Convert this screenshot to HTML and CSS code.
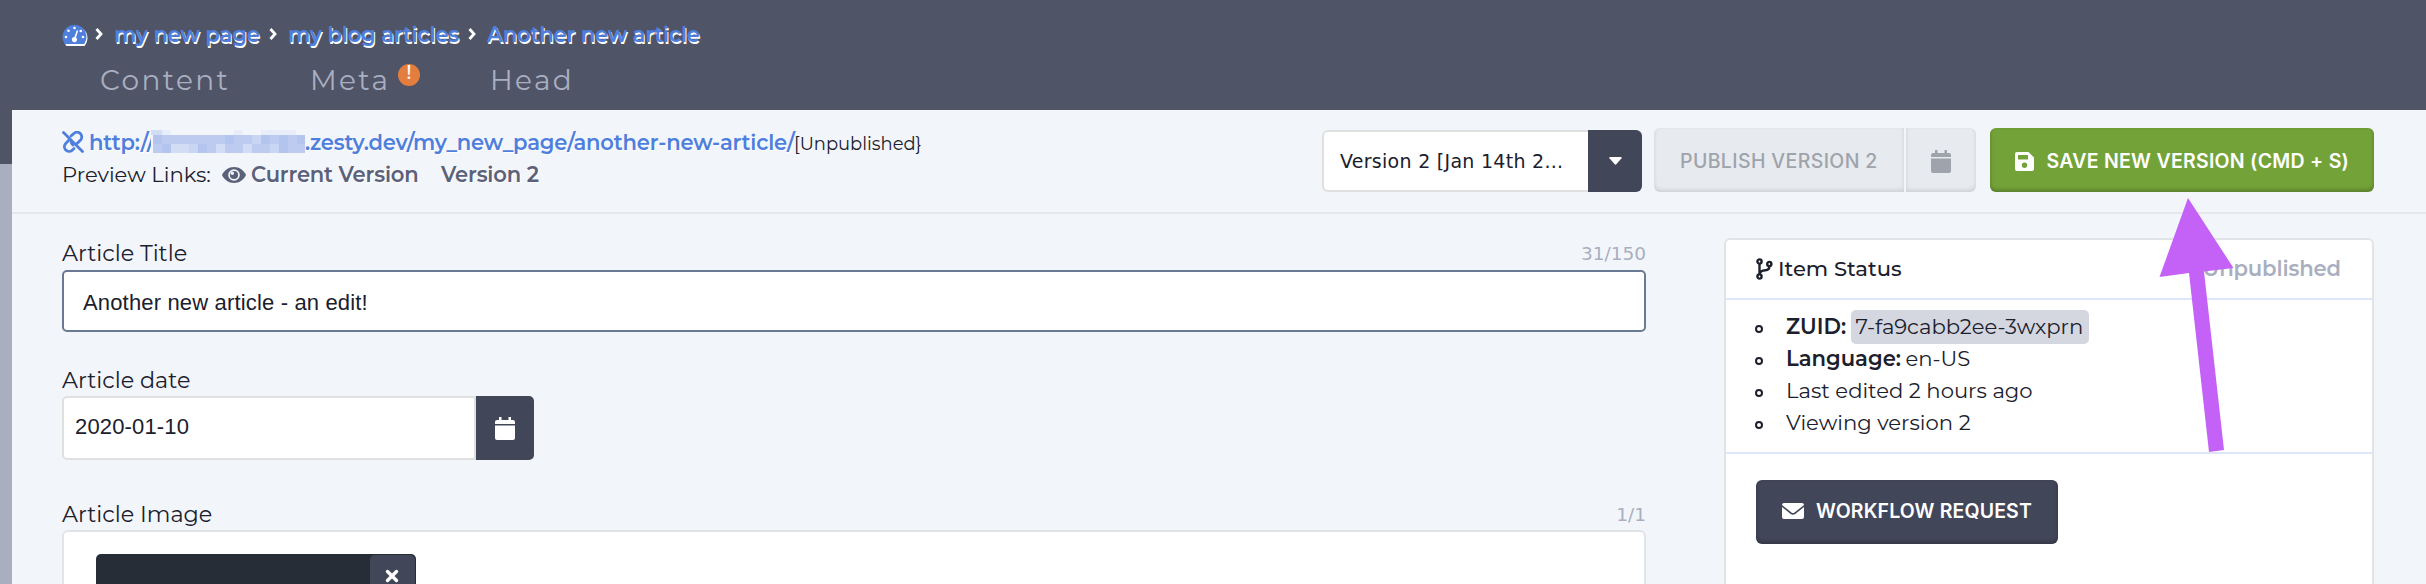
FILE: index.html
```html
<!DOCTYPE html>
<html lang="en">
<head>
<meta charset="utf-8">
<title>Another new article</title>
<link rel="stylesheet" href="styles.css">
</head>
<body>
<div class="app">
  <header class="header">
    <nav class="crumbs">
      <svg class="gauge" viewBox="0 0 26 22"><path fill="#fff" d="M4 21.500A12 12 0 1 1 23 21.500Q22.500 22 22 22H5Q4.500 22 4 21.500Z"/><path fill="#4f7fdd" d="M2.500 19.500A12 12 0 1 1 22.500 19.500Q22 20 21.500 20H3.500Q3 20 2.500 19.500Z"/><g fill="#fff"><circle cx="4" cy="13" r="1.300"/><circle cx="6.500" cy="6.800" r="1.300"/><circle cx="12.500" cy="4" r="1.300"/><circle cx="21" cy="13" r="1.300"/><circle cx="18.800" cy="7" r="1.300"/><path d="M14.800 6.300L16.200 6.800L14 13.500A2.600 2.600 0 1 1 12.400 13Z"/></g></svg>
      <svg class="chev" viewBox="0 0 8 12"><path d="M1.500 1L6 6L1.500 11"/></svg>
      <a class="crumb c1">my new page</a>
      <svg class="chev" viewBox="0 0 8 12"><path d="M1.500 1L6 6L1.500 11"/></svg>
      <a class="crumb c2">my blog articles</a>
      <svg class="chev" viewBox="0 0 8 12"><path d="M1.500 1L6 6L1.500 11"/></svg>
      <a class="crumb">Another new article</a>
    </nav>
    <div class="tabs">
      <span class="tab-content">Content</span>
      <span class="tab-meta">Meta</span><span class="alert">!</span>
      <span>Head</span>
    </div>
  </header>
  <div class="body">
    <aside class="rail"></aside>
    <main class="main">
      <section class="toolbar">
        <div class="links">
          <div class="line">
            <svg class="unlink" viewBox="0 0 22 22"><g fill="none" stroke="#4f7fdd" stroke-width="2.800" stroke-linecap="round"><path d="M1.500 1.500L20.500 20.500"/><path d="M9 5L11.500 2.800A4.700 4.700 0 0 1 18.600 9L15 12.600"/><path d="M6.500 9.500L3.400 12.800A4.700 4.700 0 0 0 10 19.400L12 17.500"/><path d="M9 10.500A4.500 4.500 0 0 0 11 14"/></g></svg>
            <a class="url protocol">http://</a>
            <svg class="pixels" viewBox="0 0 154 23"><rect width="154" height="23" fill="#f2f6fb"/><rect x="2" y="5" width="152" height="18" fill="#bccbef"/><g fill="#d2ddf5"><rect width="11" height="5"/><rect x="29" y="14" width="9" height="9"/><rect x="20" y="14" width="9" height="9"/><rect x="65" y="14" width="9" height="9"/><rect x="92" y="14" width="9" height="9"/><rect x="119" y="14" width="9" height="9" fill="#c9d6f3"/><rect x="38" y="14" width="9" height="9" fill="#c9d6f3"/><rect x="101" y="5" width="9" height="9" fill="#c9d6f3"/></g><g fill="#b3c5ee"><rect x="2" y="5" width="9" height="9"/><rect x="11" y="14" width="9" height="9"/><rect x="47" y="14" width="9" height="9"/><rect x="74" y="5" width="9" height="9"/><rect x="110" y="5" width="9" height="9"/><rect x="128" y="5" width="9" height="18"/><rect x="146" y="5" width="8" height="9"/></g><g fill="#e7edf9"><rect x="11" width="9" height="5"/><rect x="83" width="9" height="5"/><rect x="110" width="35" height="5"/></g></svg>
            <a class="url path">.zesty.dev/my_new_page/another-new-article/</a>
            <span class="state">[Unpublished}</span>
          </div>
          <div class="line preview">
            <span class="preview-label">Preview Links:</span>
            <svg class="eye" viewBox="0 0 24 16"><path fill="#5b6179" d="M12 0C6.500 0 2.200 3.300 0 8C2.200 12.700 6.500 16 12 16S21.800 12.700 24 8C21.800 3.300 17.500 0 12 0Z"/><circle cx="12" cy="8" r="5.800" fill="#f2f6fb"/><circle cx="12" cy="8" r="4.100" fill="#5b6179"/><circle cx="10.300" cy="6.300" r="1.700" fill="#f2f6fb"/></svg>
            <a class="version current">Current Version</a>
            <a class="version">Version 2</a>
          </div>
        </div>
        <div class="actions">
          <div class="select"><span class="select-text">Version 2 [Jan 14th 2...</span><span class="select-btn"><svg class="caret" viewBox="0 0 13 8"><path fill="#fff" d="M1 0H12Q13 .300 12.500 1.200L7.300 7.300Q6.500 8 5.700 7.300L.500 1.200Q0 .300 1 0Z"/></svg></span></div>
          <button class="btn pub">PUBLISH VERSION 2</button>
          <button class="btn cal"><svg class="cal-i" viewBox="0 0 20 23"><path d="M4 0H6.500V3H13.500V0H16V3H18Q20 3 20 5V7H0V5Q0 3 2 3H4ZM0 8.500H20V21Q20 23 18 23H2Q0 23 0 21Z"/></svg></button>
          <button class="btn save"><svg class="save-i" viewBox="0 0 19 19"><path fill="#fff" fill-rule="evenodd" d="M2 0H13.500L19 5.500V17Q19 19 17 19H2Q0 19 0 17V2Q0 0 2 0ZM3 3V7.500H13V3ZM9.500 10.500A2.700 2.700 0 1 0 9.500 15.900A2.700 2.700 0 1 0 9.500 10.500Z"/></svg><span>SAVE NEW VERSION (CMD + S)</span></button>
        </div>
      </section>
      <section class="content">
        <div class="form">
          <div class="label"><span>Article Title</span><span class="count">31/150</span></div>
          <div class="field title">Another new article - an edit!</div>
          <div class="label date-label"><span>Article date</span></div>
          <div class="date"><div class="field date-field">2020-01-10</div><span class="date-btn"><svg class="cal-i" viewBox="0 0 20 23"><path d="M4 0H6.500V3H13.500V0H16V3H18Q20 3 20 5V7H0V5Q0 3 2 3H4ZM0 8.500H20V21Q20 23 18 23H2Q0 23 0 21Z"/></svg></span></div>
          <div class="label image-label"><span>Article Image</span><span class="count">1/1</span></div>
          <div class="images"><div class="thumb"><span class="remove"><svg class="x" viewBox="0 0 14 14"><path d="M2.500 2.500L11.500 11.500M11.500 2.500L2.500 11.500"/></svg></span></div></div>
        </div>
        <aside class="card">
          <div class="card-head">
            <svg class="branch" viewBox="0 0 17 22"><g fill="none" stroke="#1b202c" stroke-width="2.400"><circle cx="3.500" cy="3.500" r="2.100"/><circle cx="3.500" cy="18.500" r="2.100"/><circle cx="13.300" cy="6" r="2.100"/><path d="M3.500 6V16M13.300 8.500Q13.300 12 9.500 12.300Q4 12.700 3.500 16"/></g></svg>
            <span class="card-title">Item Status</span>
            <span class="card-state">Unpublished</span>
          </div>
          <ul class="facts">
            <li><b>ZUID:</b><span class="pill">7-fa9cabb2ee-3wxprn</span></li>
            <li><b>Language:</b><span>en-US</span></li>
            <li><span>Last edited 2 hours ago</span></li>
            <li><span>Viewing version 2</span></li>
          </ul>
          <div class="card-foot"><button class="btn flow"><svg class="mail" viewBox="0 0 22 16"><path fill="#fff" d="M2 0H20Q22 0 22 2L12.500 9.500Q11 10.600 9.500 9.500L0 2Q0 0 2 0ZM0 4L8.700 10.900Q11 12.500 13.300 10.900L22 4V14Q22 16 20 16H2Q0 16 0 14Z"/></svg><span>WORKFLOW REQUEST</span></button></div>
        </aside>
      </section>
    </main>
  </div>
  <svg class="arrow" viewBox="0 0 76 256"><path fill="#c462f8" d="M29 0L74.500 70L45 73.500L65 252L50 254L30 75L.500 79Z"/></svg>
</div>
</body>
</html>
```
FILE: styles.css
```css
* { box-sizing: border-box; }
body { margin: 0; font-family: Montserrat, Inter, "Liberation Sans", sans-serif; font-size: 21.150px; color: #1b202c; }
svg { display: block; flex: none; }
span, a, b { white-space: nowrap; }
.app { position: relative; width: 2426px; height: 584px; overflow: hidden; background: #4f5467; }
.header { height: 110px; padding: 20px 0 0 62px; }
.crumbs { display: flex; align-items: center; height: 30px; line-height: 30px; }
.gauge { width: 26px; height: 22px; margin-right: 7px; }
.chev { width: 8px; height: 12px; margin: 0 11px 2px 0; fill: none; stroke: #fff; stroke-width: 2.800; overflow: visible; }
.crumb, .url, .version { font-weight: 600; letter-spacing: -.200px; }
.crumb { color: #4f7fdd; text-shadow: 1px 2px 0 #fff; }
.c1 { width: 155px; }
.c2 { width: 180px; }
.tabs { display: flex; height: 40px; line-height: 40px; margin-top: 10px; padding-left: 38px; font-size: 28px; letter-spacing: 2.350px; color: #a9afc0; }
.tab-content { width: 210px; }
.tab-meta { width: 81px; }
.alert { width: 22px; height: 22px; margin: 4px 70px 0 7px; border-radius: 11px; background: #e47e3e; color: #fff; font-size: 20px; font-weight: 500; line-height: 16px; letter-spacing: 0; text-align: center; }
.body { display: flex; height: 474px; }
.rail { width: 12px; margin-top: 54px; background: #a9afbf; }
.main { flex: 1; background: #f2f6fb; }
.toolbar { display: flex; justify-content: space-between; height: 104px; padding: 17px 52px 0 50px; border-bottom: 2px solid #e5e7ea; }
.line { display: flex; height: 32px; line-height: 31px; }
.unlink { width: 22px; height: 22px; margin: 4px 5px 0 0; }
.url { color: #4f7fdd; text-shadow: 1px 1px 0 #fff; }
.protocol { width: 62px; }
.path { width: 489px; letter-spacing: -.220px; }
.pixels { width: 154px; height: 23px; margin-top: 3px; }
.state { width: 130px; font-size: 17.900px; line-height: 33px; }
.preview-label { width: 149px; }
.eye { width: 24px; height: 16px; margin: 8px 5px 0 11px; }
.version { color: #5b6179; text-shadow: 1px 1px 0 #fff; }
.current { width: 190px; }
.actions { display: flex; align-items: flex-start; padding-top: 1px; }
.select { display: flex; width: 320px; height: 62px; margin: 2px 12px 0 0; font-family: Verdana, "DejaVu Sans", sans-serif; font-size: 19px; letter-spacing: .280px; }
.select-text { width: 266px; border: 2px solid #e0e0e0; border-right: 0; border-radius: 6px 0 0 6px; background: #fff; padding-left: 16px; line-height: 58px; }
.select-btn { width: 54px; background: #424659; border-radius: 0 6px 6px 0; display: flex; align-items: center; justify-content: center; }
.caret { width: 13px; height: 8px; }
.btn { display: flex; align-items: center; height: 64px; border: 0; border-radius: 6px; padding: 0; font: 500 19.500px/30px Inter, sans-serif; white-space: nowrap; box-shadow: inset 0 -2px 4px rgba(0, 0, 0, .25); }
.pub { width: 250px; padding: 2px 0 0 26px; border-radius: 6px 0 0 6px; margin-right: 2px; background: #e7ebef; color: #9fa3ab; letter-spacing: .370px; box-shadow: inset 0 -2px 4px rgba(0, 0, 0, .12); }
.cal { width: 70px; justify-content: center; padding-top: 3px; border-radius: 0 6px 6px 0; margin-right: 14px; background: #e7ebef; fill: #9fa3ab; box-shadow: inset 0 -2px 4px rgba(0, 0, 0, .12); }
.cal-i { width: 20px; height: 23px; }
.save { width: 384px; padding: 2px 0 0 25px; background: #73a338; color: #fff; font-weight: 600; letter-spacing: .270px; }
.save-i { width: 19px; height: 19px; margin-right: 12.500px; }
.content { display: flex; justify-content: space-between; padding: 24px 52px 0 50px; }
.form { width: 1584px; }
.label { display: flex; justify-content: space-between; height: 31px; font-size: 22.300px; line-height: 31px; }
.count { font-family: Verdana, "DejaVu Sans", sans-serif; font-size: 18.500px; color: #a9afc0; }
.field { background: #fff; border: 2px solid #e0e0e0; border-radius: 5px; font-family: "Liberation Sans", sans-serif; font-size: 22px; white-space: nowrap; letter-spacing: .160px; }
.title { height: 62px; margin-top: 1px; border-color: #6b7a94; padding-left: 19px; line-height: 61px; }
.date-label { margin-top: 33px; }
.date { display: flex; height: 64px; }
.date-field { width: 414px; border-radius: 5px 0 0 5px; padding-left: 11px; line-height: 57px; }
.date-btn { width: 58px; display: flex; align-items: center; justify-content: center; background: #424659; border-radius: 0 5px 5px 0; fill: #fff; }
.image-label { margin-top: 39px; }
.images { height: 80px; border: 2px solid #e1e4e7; border-radius: 6px; background: #fff; padding: 22px 32px; }
.thumb { display: flex; justify-content: flex-end; width: 320px; height: 60px; padding: 1px 1px 0; background: #272d37; border-radius: 5px; }
.remove { width: 45px; padding: 14px 15px; background: #424659; border-radius: 5px; }
.x { width: 14px; height: 14px; stroke: #fff; stroke-width: 3.400; stroke-linecap: round; }
.card { width: 650px; height: 400px; border: 2px solid #e1e4e7; border-radius: 6px; background: #fff; }
.card-head { display: flex; align-items: center; height: 60px; padding: 0 31px 1px 30px; border-bottom: 2px solid #dfe6fb; }
.branch { width: 17px; height: 22px; margin-right: 5px; }
.card-title { font-weight: 500; }
.card-state { margin-left: auto; color: #a9afc0; font-weight: 600; letter-spacing: -.130px; }
.facts { list-style: none; height: 154px; margin: 0; padding: 11px 0 0 28px; border-bottom: 2px solid #dfe6fb; }
.facts li { display: flex; align-items: center; height: 32px; line-height: 32px; }
.facts li::before { content: ""; box-sizing: border-box; width: 8px; height: 8px; margin: 4px 23px 0 1px; border: 2px solid #1b202c; border-radius: 50%; }
.facts b { font-weight: 600; margin-right: 4.500px; }
.pill { width: 238px; height: 34px; padding-left: 5px; line-height: 34px; background: #d4d7e0; border-radius: 5px; }
.card-foot { padding: 26px 30px; }
.flow { width: 302px; padding: 0 0 2px 26px; background: #424659; color: #fff; font-weight: 600; letter-spacing: .140px; }
.mail { width: 22px; height: 16px; margin-right: 12px; }
.arrow { position: absolute; left: 2159px; top: 198px; width: 76px; height: 256px; }
```
